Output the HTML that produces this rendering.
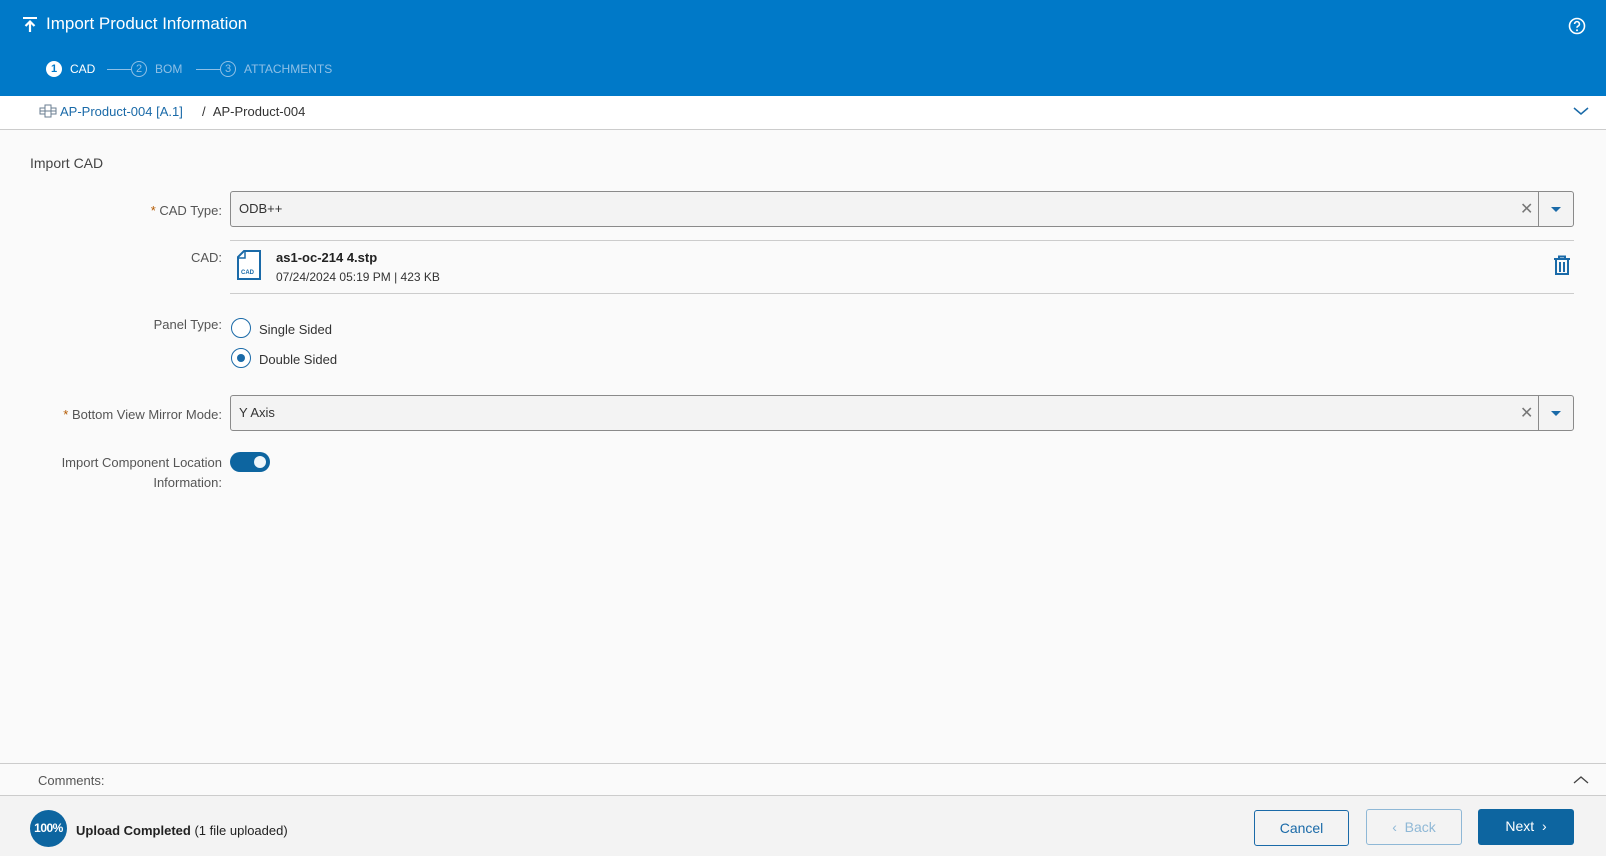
<!DOCTYPE html>
<html><head><style>
*{box-sizing:border-box;margin:0;padding:0}
body{width:1606px;height:856px;overflow:hidden;background:#fafafa;font-family:"Liberation Sans",sans-serif;font-size:13px;color:#333;position:relative}
.a{position:absolute}
.hdr{left:0;top:0;width:1606px;height:96px;background:#0079c8;color:#fff}
.lbl{text-align:right;color:#555;font-size:13px}
.inp{border:1px solid #8a8a8a;border-radius:3px;background:#f3f3f3;height:36px}
.btn{height:36px;border-radius:3px;font-size:14px;text-align:center;line-height:34px}
</style></head><body>
<div class="a hdr">
 <svg class="a" style="left:22px;top:16px" width="16" height="17" viewBox="0 0 16 17"><rect x="1" y="1" width="14" height="2" fill="#fff"/><path d="M8 16V6M3.5 10L8 5.5 12.5 10" stroke="#fff" stroke-width="2.2" fill="none"/></svg>
 <div class="a" style="left:46px;top:14px;font-size:17px">Import Product Information</div>
 <svg class="a" style="left:1568px;top:17px" width="18" height="18" viewBox="0 0 18 18"><circle cx="9" cy="9" r="7.5" stroke="#fff" stroke-width="1.6" fill="none"/><path d="M6.6 7a2.4 2.4 0 1 1 3.4 2.2c-.8.4-1 .9-1 1.6" stroke="#fff" stroke-width="1.6" fill="none"/><circle cx="9" cy="13.2" r="1" fill="#fff"/></svg>
 <div class="a" style="left:46px;top:61px;width:16px;height:16px;border-radius:50%;background:#fff;color:#0079c8;font-size:11px;text-align:center;line-height:16px;font-weight:bold">1</div>
 <div class="a" style="left:70px;top:62px;font-size:12px">CAD</div>
 <div class="a" style="left:107px;top:69px;width:24px;height:1px;background:#8fc0e6"></div>
 <div class="a" style="left:131px;top:61px;width:16px;height:16px;border-radius:50%;border:1px solid #8fc0e6;color:#8fc0e6;font-size:11px;text-align:center;line-height:14px">2</div>
 <div class="a" style="left:155px;top:62px;font-size:12px;color:#8fc0e6">BOM</div>
 <div class="a" style="left:196px;top:69px;width:24px;height:1px;background:#8fc0e6"></div>
 <div class="a" style="left:220px;top:61px;width:16px;height:16px;border-radius:50%;border:1px solid #8fc0e6;color:#8fc0e6;font-size:11px;text-align:center;line-height:14px">3</div>
 <div class="a" style="left:244px;top:62px;font-size:12px;color:#8fc0e6">ATTACHMENTS</div>
</div>
<div class="a" style="left:0;top:96px;width:1606px;height:34px;background:#fff;border-bottom:1px solid #ccc"></div>
<svg class="a" style="left:39px;top:104px" width="18" height="14" viewBox="0 0 18 14"><path d="M6 1h6v3h5v6h-5v3H6v-3H1V4h5z M6 4v6M12 4v6M1 7h16" stroke="#6a7d90" fill="none"/></svg>
<div class="a" style="left:60px;top:104px;color:#1a6aa8">AP-Product-004 [A.1]</div>
<div class="a" style="left:202px;top:104px;color:#333">/&nbsp;&nbsp;AP-Product-004</div>
<svg class="a" style="left:1573px;top:106px" width="16" height="10"><path d="M1 2l7 6 7-6" stroke="#1a6aa8" stroke-width="1.5" fill="none"/></svg>
<div class="a" style="left:30px;top:155px;font-size:14px;color:#444">Import CAD</div>

<div class="a lbl" style="left:40px;width:182px;top:203px"><span style="color:#b35900">*</span> CAD Type:</div>
<div class="a inp" style="left:230px;top:191px;width:1344px"></div>
<div class="a" style="left:239px;top:201px">ODB++</div>
<div class="a" style="left:1520px;top:199px;color:#777;font-size:16px">✕</div>
<div class="a" style="left:1538px;top:191px;width:1px;height:36px;background:#8a8a8a"></div>
<svg class="a" style="left:1550px;top:205px" width="12" height="8"><path d="M1 2h10L6 7z" fill="#1a6aa8"/></svg>

<div class="a" style="left:230px;top:240px;width:1344px;height:1px;background:#ccc"></div>
<div class="a lbl" style="left:40px;width:182px;top:250px">CAD:</div>
<svg class="a" style="left:236px;top:250px" width="26" height="31" viewBox="0 0 26 31"><path d="M8 1h16v28H2V7z" stroke="#1a6aa8" stroke-width="2" fill="#fff"/><path d="M2 8h7V1" stroke="#1a6aa8" stroke-width="1.5" fill="none"/><text x="5" y="24" font-size="6" font-family="Liberation Sans" font-weight="bold" fill="#1a6aa8">CAD</text></svg>
<div class="a" style="left:276px;top:250px;font-weight:bold;color:#222">as1-oc-214 4.stp</div>
<div class="a" style="left:276px;top:270px;font-size:12px;color:#333">07/24/2024 05:19 PM | 423 KB</div>
<svg class="a" style="left:1553px;top:255px" width="18" height="20" viewBox="0 0 18 20"><path d="M6 3V1.5h6V3M1 4h16M3 4v15h12V4M7 7v10M11 7v10" stroke="#1a6aa8" stroke-width="2" fill="none"/></svg>
<div class="a" style="left:230px;top:293px;width:1344px;height:1px;background:#ccc"></div>

<div class="a lbl" style="left:40px;width:182px;top:317px">Panel Type:</div>
<div class="a" style="left:231px;top:318px;width:20px;height:20px;border-radius:50%;border:1.5px solid #1a6aa8;background:#fff"></div>
<div class="a" style="left:259px;top:322px">Single Sided</div>
<div class="a" style="left:231px;top:348px;width:20px;height:20px;border-radius:50%;border:1.5px solid #1a6aa8;background:#fff"></div>
<div class="a" style="left:237px;top:354px;width:8px;height:8px;border-radius:50%;background:#1a6aa8"></div>
<div class="a" style="left:259px;top:352px">Double Sided</div>

<div class="a lbl" style="left:20px;width:202px;top:407px"><span style="color:#b35900">*</span> Bottom View Mirror Mode:</div>
<div class="a inp" style="left:230px;top:395px;width:1344px"></div>
<div class="a" style="left:239px;top:405px">Y Axis</div>
<div class="a" style="left:1520px;top:403px;color:#777;font-size:16px">✕</div>
<div class="a" style="left:1538px;top:395px;width:1px;height:36px;background:#8a8a8a"></div>
<svg class="a" style="left:1550px;top:409px" width="12" height="8"><path d="M1 2h10L6 7z" fill="#1a6aa8"/></svg>

<div class="a lbl" style="left:30px;width:192px;top:453px;line-height:20px">Import Component Location<br>Information:</div>
<div class="a" style="left:230px;top:452px;width:40px;height:20px;border-radius:10px;background:#0d65a0"></div>
<div class="a" style="left:254px;top:456px;width:12px;height:12px;border-radius:50%;background:#eef6fa"></div>

<div class="a" style="left:0;top:763px;width:1606px;height:1px;background:#ccc"></div>
<div class="a" style="left:38px;top:773px;color:#555">Comments:</div>
<svg class="a" style="left:1573px;top:775px" width="16" height="10"><path d="M1 8l7-6 7 6" stroke="#444" stroke-width="1.3" fill="none"/></svg>
<div class="a" style="left:0;top:795px;width:1606px;height:61px;background:#f3f3f3;border-top:1px solid #ccc"></div>
<div class="a" style="left:30px;top:810px;width:37px;height:37px;border-radius:50%;background:#0d65a0;color:#fff;font-size:12px;font-weight:bold;text-align:center;line-height:37px;letter-spacing:-0.5px">100%</div>
<div class="a" style="left:76px;top:823px;color:#222"><b>Upload Completed</b> (1 file uploaded)</div>
<div class="a btn" style="left:1254px;top:810px;width:95px;border:1px solid #1a6aa8;color:#1a6aa8">Cancel</div>
<div class="a btn" style="left:1366px;top:809px;width:96px;border:1px solid #8fb8d6;color:#8fb8d6">‹&nbsp; Back</div>
<div class="a btn" style="left:1478px;top:809px;width:96px;background:#0d65a0;color:#fff">Next&nbsp; ›</div>
</body></html>
